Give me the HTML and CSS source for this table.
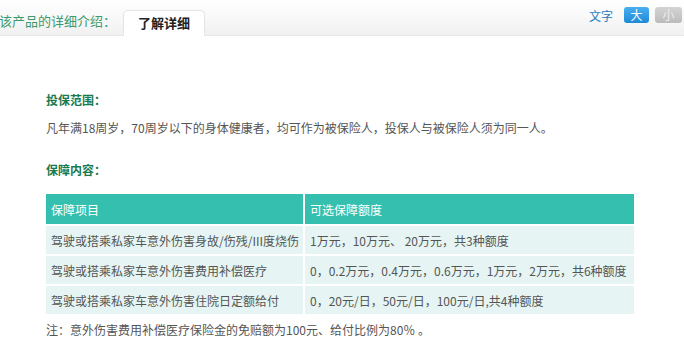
FILE: index.html
```html
<!DOCTYPE html>
<html lang="zh">
<head>
<meta charset="utf-8">
<link rel="stylesheet" href="styles.css">
</head>
<body>
<div class="topbar">
  <div class="intro">该产品的详细介绍：</div>
  <div class="tab">了解详细</div>
  <div class="spacer"></div>
  <div class="fontsize">
    <span class="label">文字</span>
    <span class="btn big">大</span>
    <span class="btn small">小</span>
  </div>
</div>
<div class="content">
  <h3 class="title first">投保范围：</h3>
  <p class="text">凡年满18周岁，70周岁以下的身体健康者，均可作为被保险人，投保人与被保险人须为同一人。</p>
  <h3 class="title">保障内容：</h3>
  <table class="cover">
    <colgroup><col class="c1"><col></colgroup>
    <thead>
      <tr><th>保障项目</th><th>可选保障额度</th></tr>
    </thead>
    <tbody>
      <tr><td>驾驶或搭乘私家车意外伤害身故/伤残/III度烧伤</td><td>1万元，10万元、 20万元，共3种额度</td></tr>
      <tr><td>驾驶或搭乘私家车意外伤害费用补偿医疗</td><td>0，0.2万元，0.4万元，0.6万元，1万元，2万元，共6种额度</td></tr>
      <tr><td>驾驶或搭乘私家车意外伤害住院日定额给付</td><td>0，20元/日，50元/日，100元/日,共4种额度</td></tr>
    </tbody>
  </table>
  <p class="note">注：意外伤害费用补偿医疗保险金的免赔额为100元、给付比例为80％ 。</p>
</div>
</body>
</html>
```
FILE: styles.css
```css
* { box-sizing: border-box; }
body {
  margin: 0;
  width: 684px;
  height: 352px;
  overflow: hidden;
  background: #fff;
  font-family: "Noto Sans CJK SC", "Noto Sans", sans-serif;
  font-size: 12px;
  color: #555;
}
.topbar {
  height: 36px;
  display: flex;
  align-items: flex-end;
  background: linear-gradient(#ffffff, #f1f1f1);
  border-bottom: 1px solid #e6e6e6;
}
.intro {
  font-size: 13px;
  color: #3c9a6e;
  height: 26px;
  line-height: 24px;
  margin-left: -1px;
  width: 124px;
}
.tab {
  width: 82px;
  height: 26px;
  margin-bottom: -1px;
  background: #fff;
  border: 1px solid #e4e4e4;
  border-bottom: none;
  border-radius: 5px 5px 0 0;
  text-align: center;
  font-weight: bold;
  font-size: 13px;
  line-height: 24px;
  color: #222;
}
.spacer { flex: 1; }
.fontsize {
  display: flex;
  align-items: center;
  height: 35px;
  padding-bottom: 5px;
  margin-right: 2px;
}
.label { color: #1b7cc0; font-size: 12px; margin-right: 11px; }
.btn {
  width: 25px;
  height: 16px;
  border-radius: 3px;
  text-align: center;
  line-height: 16px;
  font-size: 12px;
  color: #fff;
}
.big { background: linear-gradient(#49aef0, #1e8ad6); margin-right: 6px; }
.small { width: 27px; background: linear-gradient(#d4d4d4, #bcbcbc); color: #eee; }
.content { padding-left: 46px; }
.title {
  margin: 0;
  font-size: 12px;
  font-weight: bold;
  color: #187a4e;
  line-height: 16px;
}
.title.first { margin-top: 56px; }
.text { margin: 12px 0 26px; line-height: 16px; }
.cover {
  margin-top: 14px;
  width: 592px;
  table-layout: fixed;
  border-collapse: separate;
  border-spacing: 2px;
  margin-left: -2px;
}
.cover col.c1 { width: 257px; }
.cover th {
  background: #35bfae;
  color: #fff;
  font-weight: normal;
  text-align: left;
  height: 30px;
  padding: 0 5px;
}
.cover td {
  background: #e6f5f3;
  height: 28px;
  padding: 0 5px;
  color: #555;
  white-space: nowrap;
  overflow: hidden;
}
.note { margin: 6px 0 0; line-height: 16px; }
```
